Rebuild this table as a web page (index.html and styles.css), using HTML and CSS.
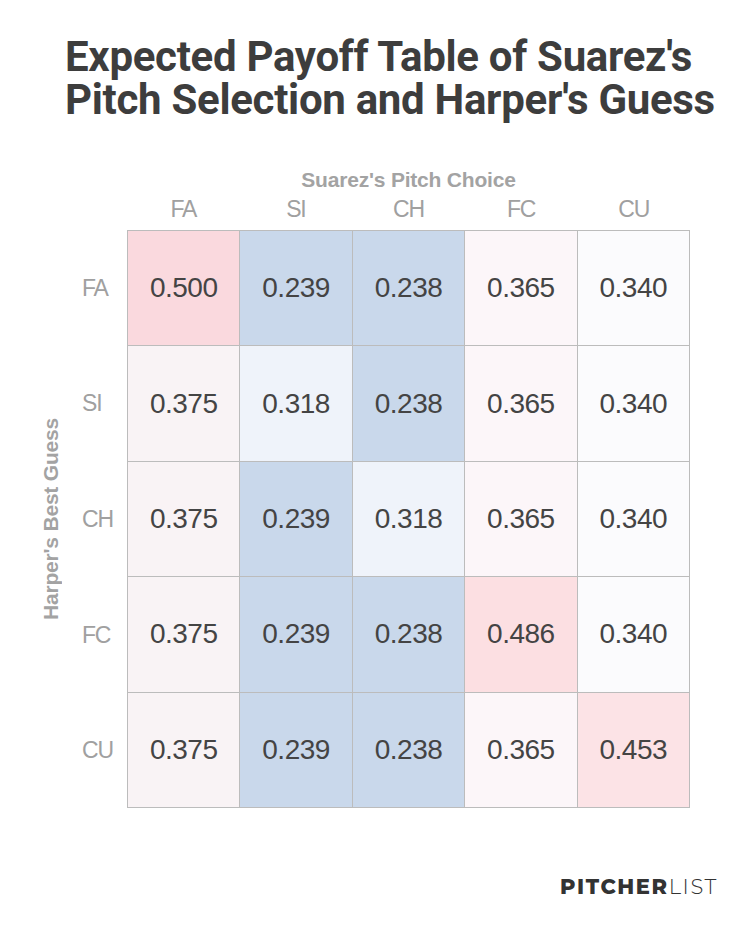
FILE: index.html
```html
<!DOCTYPE html>
<html lang="en">
<head>
<meta charset="utf-8">
<title>Expected Payoff Table</title>
<link rel="stylesheet" href="styles.css">
</head>
<body>
<div class="page">
  <h1 class="title"><span class="title-line">Expected Payoff Table of Suarez's</span><span class="title-line">Pitch Selection and Harper's Guess</span></h1>
  <div class="chart">
    <div class="x-title">Suarez's Pitch Choice</div>
    <div class="col-labels">
      <span>FA</span><span>SI</span><span>CH</span><span>FC</span><span>CU</span>
    </div>
    <div class="y-title">Harper's Best Guess</div>
    <div class="row-labels">
      <span>FA</span><span>SI</span><span>CH</span><span>FC</span><span>CU</span>
    </div>
    <div class="matrix">
      <div class="cell hot1">0.500</div>
      <div class="cell cold">0.239</div>
      <div class="cell cold">0.238</div>
      <div class="cell warm3">0.365</div>
      <div class="cell neutral">0.340</div>

      <div class="cell warm2">0.375</div>
      <div class="cell cool">0.318</div>
      <div class="cell cold">0.238</div>
      <div class="cell warm3">0.365</div>
      <div class="cell neutral">0.340</div>

      <div class="cell warm2">0.375</div>
      <div class="cell cold">0.239</div>
      <div class="cell cool">0.318</div>
      <div class="cell warm3">0.365</div>
      <div class="cell neutral">0.340</div>

      <div class="cell warm2">0.375</div>
      <div class="cell cold">0.239</div>
      <div class="cell cold">0.238</div>
      <div class="cell hot2">0.486</div>
      <div class="cell neutral">0.340</div>

      <div class="cell warm2">0.375</div>
      <div class="cell cold">0.239</div>
      <div class="cell cold">0.238</div>
      <div class="cell warm3">0.365</div>
      <div class="cell hot3">0.453</div>
    </div>
  </div>
  <div class="footer">
    <span class="logo"><span class="logo-bold">PITCHER</span><span class="logo-light">LIST</span></span>
  </div>
</div>
</body>
</html>
```
FILE: styles.css
```css
html, body {
  margin: 0;
  padding: 0;
  background: #ffffff;
}

.page {
  width: 756px;
  height: 927px;
  box-sizing: border-box;
  padding: 35px 0 0 0;
  font-family: "Liberation Sans", Arial, sans-serif;
  color: #444444;
}

.title {
  margin: 0 0 0 65px;
  font-family: Roboto, "Liberation Sans", sans-serif;
  font-weight: 700;
  font-size: 42px;
  line-height: 43px;
  letter-spacing: -0.3px;
  color: #3d3d3d;
}

.title-line {
  display: block;
  height: 43px;
  white-space: nowrap;
}

.chart {
  margin-top: 47px;
  display: grid;
  grid-template-columns: 82px 45px 563px;
  grid-template-rows: 24px 38px 578px;
}

.x-title {
  grid-column: 3;
  grid-row: 1;
  text-align: center;
  font-weight: 700;
  font-size: 21px;
  line-height: 24px;
  color: #a3a3a3;
  letter-spacing: -0.2px;
}

.col-labels {
  grid-column: 3;
  grid-row: 2;
  display: grid;
  grid-template-columns: repeat(5, 1fr);
  align-items: start;
}

.col-labels span,
.row-labels span {
  text-align: center;
  font-size: 23px;
  line-height: 34px;
  color: #a0a0a0;
  letter-spacing: -1.2px;
}

.y-title {
  grid-column: 1;
  grid-row: 3;
  justify-self: start;
  align-self: center;
  margin-left: 40px;
  writing-mode: vertical-rl;
  transform: rotate(180deg);
  font-weight: 700;
  font-size: 21px;
  line-height: 22px;
  color: #a3a3a3;
  letter-spacing: -0.2px;
}

.row-labels {
  grid-column: 2;
  grid-row: 3;
  display: grid;
  grid-template-rows: repeat(5, 1fr);
  align-items: center;
}

.row-labels span {
  text-align: left;
}

.matrix {
  grid-column: 3;
  grid-row: 3;
  display: grid;
  grid-template-columns: repeat(5, 1fr);
  grid-template-rows: repeat(5, 1fr);
  gap: 1px;
  padding: 1px;
  background: #bcbcbc;
}

.cell {
  display: flex;
  align-items: center;
  justify-content: center;
  font-size: 28px;
  letter-spacing: -0.5px;
  color: #444444;
}

.hot1 { background: #fad9de; }
.hot2 { background: #fcdfe2; }
.hot3 { background: #fce3e6; }
.warm2 { background: #f9f3f5; }
.warm3 { background: #fcf6f9; }
.neutral { background: #fbfbfd; }
.cool { background: #eff3fa; }
.cold { background: #c9d8eb; }

.footer {
  display: flex;
  justify-content: flex-end;
  margin-top: 66px;
  padding-right: 38px;
}

.logo {
  font-family: Montserrat, "Open Sans", "Liberation Sans", sans-serif;
  font-size: 21px;
  letter-spacing: 1.6px;
  color: #333333;
}

.logo-bold {
  font-weight: 800;
}

.logo-light {
  font-weight: 300;
}
```
